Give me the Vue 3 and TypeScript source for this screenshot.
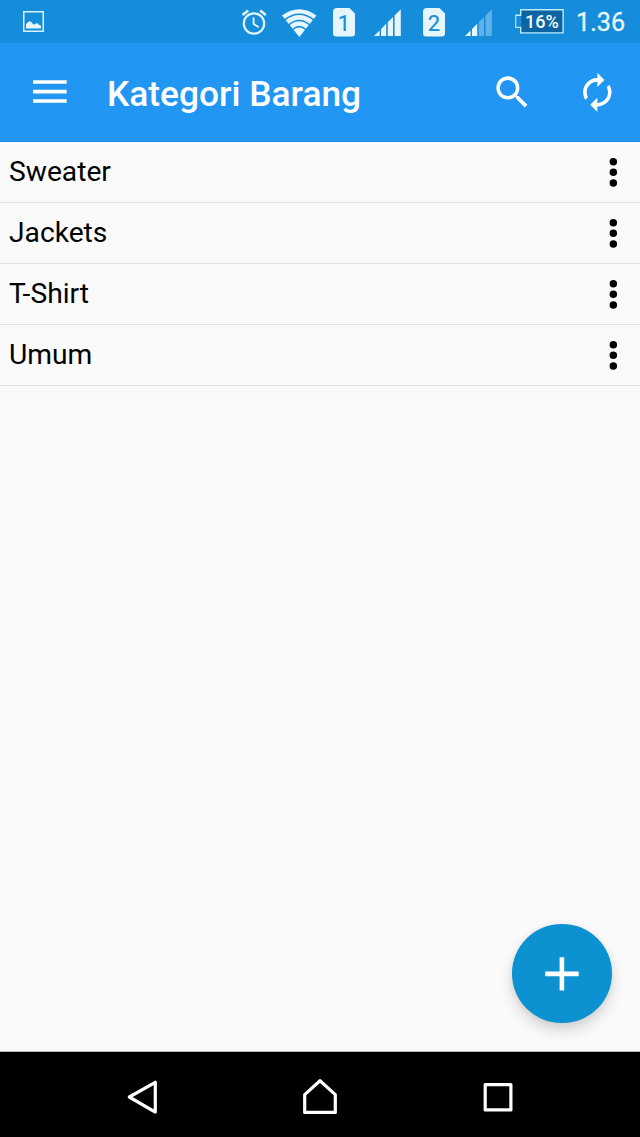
<script setup lang="ts">
import { ref } from 'vue'

interface Category {
  id: number
  name: string
}

const title = 'Kategori Barang'
const clock = '1.36'
const battery = '16%'
const categories = ref<Category[]>([
  { id: 1, name: 'Sweater' },
  { id: 2, name: 'Jackets' },
  { id: 3, name: 'T-Shirt' },
  { id: 4, name: 'Umum' },
])
</script>

<template>
  <div class="screen">
    <header class="status">
      <svg class="picture" width="21" height="21" viewBox="0 0 21 21">
        <rect x="0.75" y="0.75" width="19.5" height="19.5" fill="none" stroke="#d9f3fd" stroke-width="1.5" />
        <path d="M3 17.5V13.2L4.8 11.2L6.8 10.2L8.6 11.2L10 13.2L11.4 13.6L13.2 12.2L15 12.6L16.2 14L18 14.8V17.5Z" fill="#e6f6fe" />
      </svg>
      <div class="tray">
        <svg width="26" height="27" viewBox="0 0 26 27" fill="none" stroke="#e2f5fe">
          <circle cx="12" cy="14.5" r="10.2" stroke-width="2.2" />
          <path d="M11.6 8.5V15L16.8 18.2" stroke-width="1.9" />
          <path d="M0.6 6L6.2 1.4M18.2 1.4L23.8 6" stroke-width="2.6" />
        </svg>
        <svg class="wifi" width="35" height="29" viewBox="0 0 35 29">
          <path d="M0 6.4Q17.2 -6 34.4 6.4L17.3 28Z" fill="#e6f6fe" />
          <g fill="none" stroke="#168dda" stroke-width="1.6">
            <path d="M2.5 11Q17.2 -0.4 32 11" />
            <path d="M6.5 16Q17.3 7 28 16" />
            <path d="M10 21Q17.3 14.2 24.5 21" />
          </g>
        </svg>
        <div class="sim sim-one">1</div>
        <svg class="signal" width="27" height="28" viewBox="0 0 27 28" fill="#e6f6fe">
          <path d="M0 27L5.6 21.4V27ZM7 20L12.2 14.8V27H7ZM13.8 13.2L19 8V27H13.8ZM20.6 6.4L26.8 0.2V27H20.6Z" />
        </svg>
        <div class="sim sim-two">2</div>
        <svg class="signal" width="27" height="28" viewBox="0 0 27 28" fill="#e6f6fe">
          <path d="M0 27L5.6 21.4V27ZM7 20L12.2 14.8V27H7Z" />
          <path d="M13.8 13.2L19 8V27H13.8ZM20.6 6.4L26.8 0.2V27H20.6Z" fill="#5fb2e7" />
        </svg>
        <div class="battery">
          <svg width="49" height="25" viewBox="0 0 49 25">
            <path d="M5.7 0.7H48.1V23.9H5.7V18.3H0.9V6.3H5.7Z" fill="#0c65a2" stroke="#bcebfc" stroke-width="1.4" />
            <path d="M1.6 7H6.4V17.6H1.6Z" fill="#168dda" />
          </svg>
          <span class="percent">{{ battery }}</span>
        </div>
        <span class="clock">{{ clock }}</span>
      </div>
    </header>

    <div class="appbar">
      <button class="menu" aria-label="Menu">
        <svg width="34" height="24" viewBox="0 0 34 24" fill="#fff">
          <path d="M0 0.2H33.7V3.8H0ZM0 9.8H33.7V13.4H0ZM0 19.2H33.7V22.8H0Z" />
        </svg>
      </button>
      <h1>{{ title }}</h1>
      <button class="search" aria-label="Search">
        <svg width="42.67" height="42.67" viewBox="0 0 24 24" fill="#fff">
          <path d="M15.5 14h-.79l-.28-.27C15.41 12.59 16 11.11 16 9.5 16 5.91 13.09 3 9.5 3S3 5.91 3 9.5 5.91 16 9.5 16c1.61 0 3.09-.59 4.23-1.57l.27.28v.79l5 4.99L20.49 19l-4.99-5zm-6 0C7.01 14 5 11.99 5 9.5S7.01 5 9.5 5 14 7.01 14 9.5 11.99 14 9.5 14z" />
        </svg>
      </button>
      <button class="refresh" aria-label="Refresh">
        <svg width="42.67" height="42.67" viewBox="0 0 24 24" fill="#fff">
          <path d="M12 6v3l4-4-4-4v3c-4.42 0-8 3.58-8 8 0 1.57.46 3.03 1.24 4.26L6.7 14.8c-.45-.83-.7-1.79-.7-2.8 0-3.31 2.69-6 6-6zm6.76 1.74L17.3 9.2c.44.84.7 1.79.7 2.8 0 3.31-2.69 6-6 6v-3l-4 4 4 4v-3c4.42 0 8-3.58 8-8 0-1.57-.46-3.03-1.24-4.26z" />
        </svg>
      </button>
    </div>

    <main class="content">
      <ul class="list">
        <li v-for="category in categories" :key="category.id" class="row">
          <span class="name">{{ category.name }}</span>
          <button class="more" aria-label="More">
            <svg width="42.67" height="42.67" viewBox="0 0 24 24" fill="#000">
              <circle cx="12" cy="6" r="2.1" />
              <circle cx="12" cy="12" r="2.1" />
              <circle cx="12" cy="18" r="2.1" />
            </svg>
          </button>
        </li>
      </ul>
      <button class="fab" aria-label="Add">
        <svg width="34" height="34" viewBox="0 0 34 34" fill="#fff">
          <path d="M14.6 0.3H19.2V14.6H33.7V19.2H19.2V33.4H14.6V19.2H0.2V14.6H14.6Z" />
        </svg>
      </button>
    </main>

    <nav class="nav">
      <svg width="36" height="36" viewBox="0 0 36 36">
        <path d="M5.3 18L31.3 3.3V33.1Z" />
      </svg>
      <svg width="36" height="36" viewBox="0 0 36 36">
        <path d="M2.7 15.6L18 1.7L33.3 15.6V33.4H2.7Z" />
      </svg>
      <svg width="36" height="36" viewBox="0 0 36 36">
        <path d="M5.2 5.6H30.9V30.9H5.2Z" />
      </svg>
    </nav>
  </div>
</template>

<style>
body {
  margin: 0;
  background: #fafafa;
}
</style>

<style scoped>
.screen {
  display: flex;
  flex-direction: column;
  width: 640px;
  height: 1137px;
  overflow: hidden;
  background: #fafafa;
  color: #000;
  font-family: Roboto, 'Noto Sans', sans-serif;
}

svg {
  display: block;
  flex: none;
}

button {
  display: flex;
  padding: 0;
  border: 0;
  background: none;
}

.status {
  display: flex;
  justify-content: space-between;
  align-items: flex-start;
  box-sizing: border-box;
  flex: none;
  height: 43px;
  padding: 7px 14px 0 23px;
  background: #168dda;
}

.picture {
  margin-top: 4px;
}

.tray {
  display: flex;
  align-items: center;
  height: 30px;
  color: #e6f6fe;
}

.wifi {
  margin: 2px 0 0 14px;
}

.sim {
  width: 22px;
  height: 29px;
  border-radius: 4px;
  background: #e6f6fe;
  clip-path: polygon(0 0, 16px 0, 100% 6px, 100% 100%, 0 100%);
  color: #168dda;
  font-size: 22px;
  line-height: 31px;
  text-align: center;
  -webkit-text-stroke: 0.2px #168dda;
}

.sim-one {
  margin: 0 19px 0 16px;
}

.sim-two {
  margin: 0 20px 0 22px;
}

.signal {
  margin-top: 2px;
}

.battery {
  display: grid;
  margin: -1px 0 0 23px;
}

.battery > * {
  grid-area: 1 / 1;
}

.percent {
  padding-left: 10px;
  color: #f2fbff;
  font-size: 18px;
  font-weight: 500;
  line-height: 25px;
}

.clock {
  width: 50px;
  margin: 2px 0 0 12px;
  font-size: 25.2px;
  line-height: 30px;
  white-space: nowrap;
  -webkit-text-stroke: 0.3px #e6f6fe;
}

.appbar {
  display: flex;
  align-items: center;
  box-sizing: border-box;
  flex: none;
  height: 99px;
  padding: 0 21.3px 0 33px;
  border-bottom: 1px solid #148ae8;
  background: #2196f3;
  color: #fff;
}

.menu {
  width: 34px;
}

h1 {
  flex: 1;
  margin: 3px 0 0 40px;
  font-size: 35.3px;
  font-weight: 500;
  line-height: 42px;
  white-space: nowrap;
}

.refresh {
  margin-left: 42.3px;
}

.search,
.refresh {
  margin-top: 1.5px;
}

.content {
  display: flex;
  flex: 1;
  flex-direction: column;
  justify-content: space-between;
  border-bottom: 1px solid #b5b8b8;
}

.list {
  margin: 0;
  padding: 0;
  list-style: none;
}

.row {
  display: flex;
  align-items: center;
  justify-content: space-between;
  box-sizing: border-box;
  height: 61px;
  padding: 0 5.3px 0 9px;
  border-bottom: 1px solid #e2e2e2;
}

.name {
  font-size: 28.2px;
  line-height: 36px;
}

.fab {
  align-items: center;
  align-self: flex-end;
  justify-content: center;
  width: 99.5px;
  height: 99.5px;
  margin: 0 28.5px 27.7px 0;
  border-radius: 50%;
  background: #0d92d1;
  box-shadow: 0 8px 14px rgba(0, 0, 0, 0.14), 0 1px 6px rgba(0, 0, 0, 0.07);
}

.fab svg {
  margin-top: 1px;
}

.nav {
  display: flex;
  align-items: center;
  justify-content: space-between;
  box-sizing: border-box;
  flex: none;
  height: 85px;
  padding: 5px 124px 0;
  background: #000;
}

.nav svg {
  fill: none;
  stroke: #fff;
  stroke-linejoin: round;
  stroke-width: 3.2;
}
</style>
